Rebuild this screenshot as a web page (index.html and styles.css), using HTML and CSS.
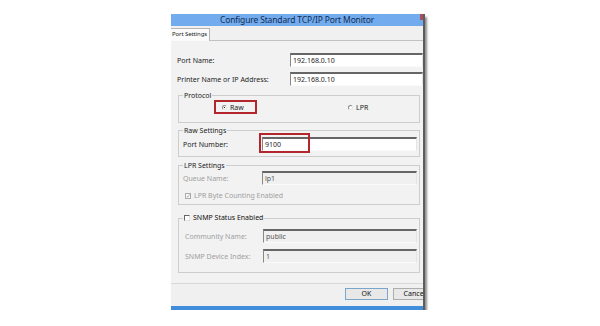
FILE: index.html
```html
<!DOCTYPE html>
<html>
<head>
    <title>Configure Standard TCP/IP Port Monitor</title>
    <link rel="stylesheet" href="styles.css">
</head>
<body>
    <div class="dialog">
        <div class="titlebar">Configure Standard TCP/IP Port Monitor<i class="close"></i></div>
        <div class="tabs"><div class="tab">Port Settings</div></div>

        <div class="page">
            <div class="row">
                <label>Port Name:</label>
                <div class="field">192.168.0.10</div>
            </div>
            <div class="row second">
                <label>Printer Name or IP Address:</label>
                <div class="field">192.168.0.10</div>
            </div>

            <!-- Protocol -->
            <fieldset class="group protocol">
                <legend>Protocol</legend>
                <div class="radios">
                    <span class="option marked"><span class="radio on"></span>Raw</span>
                    <span class="option lpr"><span class="radio"></span>LPR</span>
                </div>
            </fieldset>

            <!-- Raw Settings -->
            <fieldset class="group raw">
                <legend>Raw Settings</legend>
                <div class="row inner">
                    <label>Port Number:</label>
                    <div class="field">9100</div>
                    <span class="callout"></span>
                </div>
            </fieldset>

            <!-- LPR Settings -->
            <fieldset class="group lpr-group">
                <legend>LPR Settings</legend>
                <div class="row inner off">
                    <label>Queue Name:</label>
                    <div class="field">lp1</div>
                </div>
                <div class="check-row off">
                    <span class="box checked">&#10003;</span>LPR Byte Counting Enabled
                </div>
            </fieldset>

            <!-- SNMP -->
            <fieldset class="group snmp">
                <legend><span class="box"></span>SNMP Status Enabled</legend>
                <div class="row inner off snmp-row">
                    <label>Community Name:</label>
                    <div class="field">public</div>
                </div>
                <div class="row inner off snmp-row next">
                    <label>SNMP Device Index:</label>
                    <div class="field">1</div>
                </div>
            </fieldset>
        </div>

        <div class="buttons">
            <button class="default">OK</button>
            <button>Cancel</button>
        </div>
        <div class="bottombar"></div>
    </div>
</body>
</html>
```

FILE: styles.css
```css
body {
    margin: 0;
    background: #fff;
    color: #1e1e1e;
    font-family: "Noto Sans", "Open Sans", sans-serif;
    font-size: 7px;
}
.dialog {
    width: 252px;
    margin: 14px 0 0 171px;
    background: #f0f0f0;
    border-right: 2px solid #5d5d5d;
    overflow: hidden;
    box-shadow: 2px 3px 2px rgba(50, 50, 50, 0.55);
}
.titlebar {
    position: relative;
    height: 12px;
    line-height: 12px;
    background: #72acee;
    color: #142c55;
    font-size: 8.5px;
    letter-spacing: -0.15px;
    text-align: center;
    white-space: nowrap;
}
.close {
    position: absolute;
    right: 0;
    top: 0;
    width: 3px;
    height: 6px;
    background: #a8505c;
}
.tabs {
    height: 15px;
    box-sizing: border-box;
    padding-top: 2px;
    border-bottom: 1px solid #c2c2c2;
}
.tab {
    display: inline-block;
    height: 13px;
    box-sizing: border-box;
    padding: 0 2px 0 1px;
    border: 1px solid #b5b5b5;
    border-bottom: none;
    border-left: none;
    background: #fbfbfb;
    font-size: 6px;
    letter-spacing: -0.1px;
    line-height: 11px;
}
.page {
    padding: 12px 0 10px 6px;
    border-bottom: 1px solid #d8d8d8;
    background: #f2f2f2;
}
.row {
    display: flex;
    align-items: center;
    height: 14px;
    position: relative;
}
.row.second {
    margin-top: 5px;
}
.row label {
    width: 113px;
    flex: none;
}
.field {
    flex: 1;
    height: 14px;
    box-sizing: border-box;
    padding-left: 2px;
    border-top: 2px solid #666;
    border-left: 1px solid #888;
    border-right: 1px solid #e4e4e4;
    border-bottom: 1px solid #fafafa;
    background: #fff;
    line-height: 11px;
    white-space: nowrap;
}
.group {
    margin: 5px 3px 0 1px;
    padding: 0 2px 8px 4px;
    border: 1px solid #cdcdcd;
    min-width: 0;
}
.group legend {
    padding: 0 1px;
    line-height: 9px;
    color: #222;
}
.radios {
    display: flex;
    align-items: center;
    height: 14px;
}
.option {
    display: inline-flex;
    align-items: center;
    gap: 3px;
}
.marked {
    margin-left: 31px;
    height: 14px;
    width: 43px;
    box-sizing: border-box;
    padding-left: 6px;
    border: 2px solid #b3262e;
}
.lpr {
    margin-left: 91px;
}
.radio {
    width: 5px;
    height: 5px;
    box-sizing: border-box;
    border-radius: 50%;
    border: 1px solid #8a8a8a;
    border-right-color: #e6e6e6;
    border-bottom-color: #e6e6e6;
    background: #fff;
    position: relative;
}
.radio.on::after {
    content: "";
    position: absolute;
    left: 1px;
    top: 1px;
    width: 1px;
    height: 1px;
    background: #222;
}
.raw {
    margin-top: 3px;
    padding-bottom: 5px;
}
.raw .row {
    margin-top: 2px;
}
.inner label {
    width: 79px;
}
.callout {
    position: absolute;
    left: 76px;
    top: -4px;
    width: 51px;
    height: 20px;
    box-sizing: border-box;
    border: 2px solid #b3262e;
}
.lpr-group {
    margin-top: 4px;
    padding-bottom: 4px;
}
.lpr-group .row {
    margin-top: 1px;
}
.off {
    color: #a0a0a0;
}
.off .field {
    background: #f0f0f0;
    color: #555;
}
.check-row {
    display: flex;
    align-items: center;
    gap: 3px;
    height: 9px;
    margin-top: 6px;
    padding-left: 2px;
}
.box {
    display: inline-block;
    width: 6px;
    height: 6px;
    box-sizing: border-box;
    border: 1px solid #666;
    border-right-color: #e2e2e2;
    border-bottom-color: #e2e2e2;
    background: #fff;
    font-size: 6px;
    line-height: 5px;
    text-align: center;
    vertical-align: -1px;
    margin-right: 3px;
}
.check-row .box {
    margin-right: 0;
    border-color: #aaa;
    color: #888;
}
.snmp {
    margin-top: 8px;
    padding-bottom: 9px;
}
.snmp legend {
    line-height: 10px;
    color: #111;
}
.snmp-row {
    margin-top: 6px;
}
.snmp-row label {
    padding-left: 2px;
    width: 78px;
}
.buttons {
    display: flex;
    gap: 5px;
    padding: 4px 0 6px 174px;
}
.buttons button {
    flex: none;
    width: 43px;
    height: 12px;
    padding: 0;
    border: 1px solid #adadad;
    background: #e8e8e8;
    color: #111;
    font-family: inherit;
    font-size: 7px;
    line-height: 10px;
}
.buttons .default {
    border-color: #7aa6cc;
}
.bottombar {
    height: 4px;
    background: #3f8ddb;
}
```
